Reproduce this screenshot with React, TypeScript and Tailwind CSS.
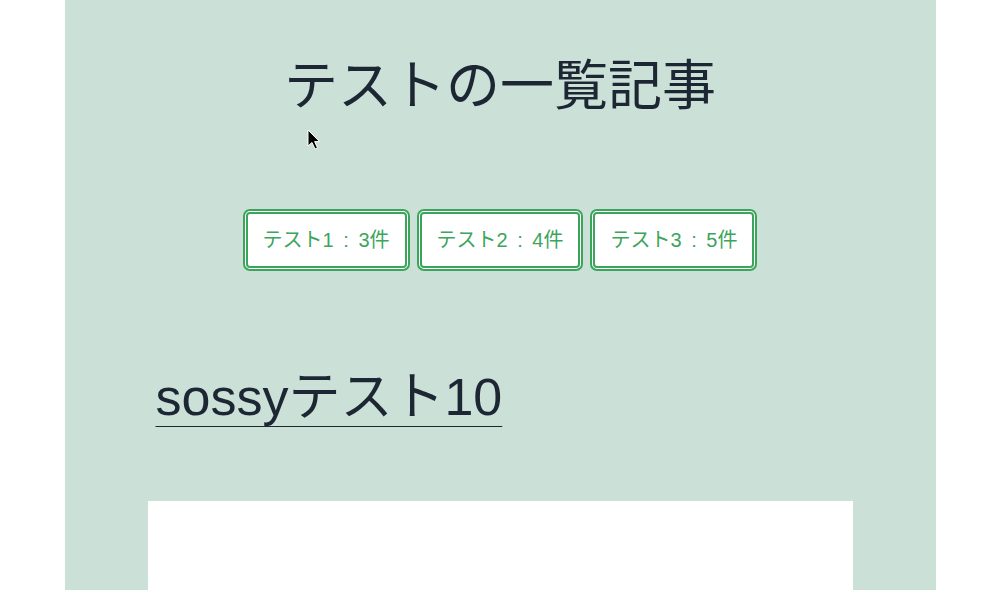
const TAGS = [
  { name: 'テスト1', count: 3 },
  { name: 'テスト2', count: 4 },
  { name: 'テスト3', count: 5 },
];

function Cursor() {
  return (
    <svg className="absolute left-[307px] top-[129px]" width="14" height="22" viewBox="0 0 14 22">
      <path d="M1 1 L1 17 L5 13.5 L8 20 L10.5 19 L7.6 12.6 L12.5 12.6 Z" fill="#000" stroke="#fff" strokeWidth="1" strokeLinejoin="round" />
    </svg>
  );
}

export default function App() {
  return (
    <div className="relative min-h-screen bg-white font-['Liberation_Sans','Noto_Sans_CJK_JP',sans-serif] text-[#1d2733]">
      <main className="mx-auto h-[590px] w-[871px] overflow-hidden bg-[#cbe0d7]">
        <h1 className="pt-[51px] text-center text-[54px] leading-[62px] font-normal font-['Noto_Sans_CJK_JP',sans-serif]">
          テストの一覧記事
        </h1>

        {/* tag buttons */}
        <div className="mt-[96px] flex justify-center gap-[7px]">
          {TAGS.map((tag) => (
            <button
              key={tag.name}
              className="box-border h-[62px] rounded-[7px] border-[5px] border-double border-[#3ba55c] bg-white px-[15px] text-[20px] text-[#3ba55c] [word-spacing:4px]"
            >
              {tag.name} : {tag.count}件
            </button>
          ))}
        </div>

        <section className="mt-[94px] px-[83px]">
          <h2 className="pl-[8px] text-[52px] leading-[64px]">
            <a href="#" className="underline decoration-1 underline-offset-[11px]">
              sossyテスト10
            </a>
          </h2>
          <div className="mt-[72px] h-[200px] bg-white" />
        </section>
      </main>
      <Cursor />
    </div>
  );
}
